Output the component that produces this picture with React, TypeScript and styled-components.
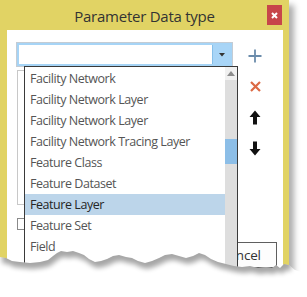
import React from 'react';
import styled, { createGlobalStyle } from 'styled-components';

const Global = createGlobalStyle`
  html, body { margin: 0; padding: 0; background: #fff; }
  body { font-family: "Open Sans", "Noto Sans", sans-serif; }
  * { box-sizing: border-box; }
`;

const Page = styled.div`
  position: relative;
  width: 307px;
  height: 297px;
  overflow: hidden;
  background: #fff;
`;

const Window = styled.div`
  width: 289px;
  height: 340px;
  background: #e1d364;
  box-shadow: 5px 5px 6px rgba(0, 0, 0, 0.32);
  display: flex;
  flex-direction: column;
`;

const TitleBar = styled.div`
  height: 30px;
  display: grid;
  grid-template-columns: 1fr auto 1fr;
  align-items: center;
`;

const Title = styled.div`
  grid-column: 2;
  font-size: 15px;
  color: #333;
  letter-spacing: -0.25px;
  padding-top: 1px;
`;

const CloseBtn = styled.div`
  grid-column: 3;
  justify-self: end;
  align-self: start;
  margin-top: 5px;
  margin-right: 7px;
  width: 15px;
  height: 20px;
  background: #c7464a;
  display: flex;
  align-items: center;
  justify-content: center;
`;

const Content = styled.div`
  flex: 1;
  margin: 0 6px 0 7px;
  background: #fff;
  padding: 12px 0 0 9px;
`;

const Body = styled.div`
  display: flex;
`;

const LeftCol = styled.div`
  width: 217px;
  display: flex;
  flex-direction: column;
`;

const Combo = styled.div`
  height: 25px;
  border: 1px solid #c4ccd4;
  box-shadow: inset 0 0 0 2px #a6d4f6;
  display: flex;
  justify-content: flex-end;
  padding: 2px;
`;

const ComboButton = styled.div`
  width: 18px;
  background: #a8d5f7;
  border-left: 1px solid #86bfe9;
  display: flex;
  align-items: center;
  justify-content: center;
`;

const ListBox = styled.div`
  margin: 3px 0 0 1px;
  height: 135px;
  width: 216px;
  border: 1px solid #c8c8c8;
`;

const CheckRow = styled.div`
  margin-top: 13px;
  margin-left: 1px;
  display: flex;
  align-items: center;
`;

const CheckBox = styled.div`
  width: 12px;
  height: 12px;
  border: 1px solid #8a8a8a;
  background: #fff;
`;

const IconCol = styled.div`
  width: 44px;
  margin-top: -2px;
  display: flex;
  flex-direction: column;
  align-items: center;
`;

const IconCell = styled.div`
  height: 31px;
  display: flex;
  align-items: center;
  justify-content: center;
`;

const Footer = styled.div`
  margin-top: 12px;
  padding-right: 6px;
  display: flex;
  justify-content: flex-end;
`;

const Button = styled.div`
  width: 73px;
  height: 26px;
  border: 1px solid #5e5e5e;
  background: #fdfdfd;
  font-size: 13.5px;
  letter-spacing: -0.2px;
  color: #333;
  display: flex;
  align-items: center;
  justify-content: center;
`;

const Dropdown = styled.div`
  position: absolute;
  left: 24px;
  top: 66px;
  width: 214px;
  height: 240px;
  border: 1px solid #3a3a3a;
  background: #fff;
  display: flex;
`;

const Items = styled.div`
  flex: 1;
  display: flex;
  flex-direction: column;
  padding-top: 1px;
`;

const Item = styled.div<{ $selected?: boolean }>`
  height: 21px;
  line-height: 22px;
  padding-left: 5px;
  font-size: 12.5px;
  letter-spacing: -0.45px;
  white-space: nowrap;
  color: ${(p) => (p.$selected ? '#262626' : '#555')};
  background: ${(p) => (p.$selected ? '#bcd5ea' : 'transparent')};
`;

const ScrollBar = styled.div`
  width: 12px;
  display: flex;
  flex-direction: column;
  background: #dedede;
`;

const ScrollArrow = styled.div`
  height: 13px;
  background: #f0f0f0;
  display: flex;
  align-items: center;
  justify-content: center;
`;

const Thumb = styled.div`
  margin-top: 59px;
  height: 25px;
  background: #8cbee7;
`;

const Tear = styled.svg`
  position: absolute;
  left: 0;
  top: 230px;
`;

const items = [
  'Facility Network',
  'Facility Network Layer',
  'Facility Network Layer',
  'Facility Network Tracing Layer',
  'Feature Class',
  'Feature Dataset',
  'Feature Layer',
  'Feature Set',
  'Field',
  'Field Info',
  'Field Mapping',
];

const line: [number, number][] = [
  [0, 257], [6, 258], [12, 261], [20, 262], [30, 263], [40, 262], [48, 260], [53, 256],
  [57, 253], [61, 251], [67, 252], [73, 251], [79, 253], [84, 255], [89, 259], [95, 262],
  [101, 261], [107, 259], [113, 256], [119, 255], [126, 257], [132, 258], [138, 261],
  [145, 263], [152, 261], [159, 258], [165, 255], [172, 254], [179, 256], [186, 258],
  [193, 256], [199, 253], [205, 255], [211, 259], [218, 262], [226, 264], [234, 266],
  [242, 267], [250, 266], [258, 268], [266, 267], [272, 268], [276, 265], [280, 268],
  [284, 264], [289, 265], [295, 270], [301, 272], [307, 272],
];

const linePath = line.map(([x, y], i) => `${i ? 'L' : 'M'}${x},${y}`).join(' ');
const belowPath = `${linePath} L307,297 L0,297 Z`;
const paperLine = line.filter(([x]) => x <= 289);
const abovePath = `M0,225 L289,225 ${paperLine
  .slice()
  .reverse()
  .map(([x, y]) => `L${x},${y}`)
  .join(' ')} Z`;

export default function App() {
  return (
    <>
      <Global />
      <Page>
        <Window>
          <TitleBar>
            <Title>Parameter Data type</Title>
            <CloseBtn>
              <svg width="7" height="7" viewBox="0 0 7 7">
                <path d="M1 1 L6 6 M6 1 L1 6" stroke="#fff" strokeWidth="2" />
              </svg>
            </CloseBtn>
          </TitleBar>
          <Content>
            <Body>
              <LeftCol>
                <Combo>
                  <ComboButton>
                    <svg width="6" height="4" viewBox="0 0 6 4">
                      <path d="M0 0 H6 L3 3.5 Z" fill="#333" />
                    </svg>
                  </ComboButton>
                </Combo>
                <ListBox />
                <CheckRow>
                  <CheckBox />
                </CheckRow>
              </LeftCol>
              <IconCol>
                <IconCell>
                  <svg width="14" height="14" viewBox="0 0 14 14">
                    <path d="M7 0.5 V13.5 M0.5 7 H13.5" stroke="#6b8cab" strokeWidth="1.8" />
                  </svg>
                </IconCell>
                <IconCell>
                  <svg width="11" height="11" viewBox="0 0 11 11">
                    <path d="M1 1 L10 10 M10 1 L1 10" stroke="#dc6a45" strokeWidth="2.2" />
                  </svg>
                </IconCell>
                <IconCell>
                  <svg width="12" height="15" viewBox="0 0 12 15">
                    <path d="M6 0.5 L11.5 7 H8 V14.5 H4 V7 H0.5 Z" fill="#111" />
                  </svg>
                </IconCell>
                <IconCell>
                  <svg width="12" height="15" viewBox="0 0 12 15">
                    <path d="M6 14.5 L11.5 8 H8 V0.5 H4 V8 H0.5 Z" fill="#111" />
                  </svg>
                </IconCell>
              </IconCol>
            </Body>
            <Footer>
              <Button>Cancel</Button>
            </Footer>
          </Content>
        </Window>
        <Dropdown>
          <Items>
            {items.map((t, i) => (
              <Item key={i} $selected={t === 'Feature Layer'}>
                {t}
              </Item>
            ))}
          </Items>
          <ScrollBar>
            <ScrollArrow>
              <svg width="8" height="5" viewBox="0 0 8 5">
                <path d="M0 5 H8 L4 0 Z" fill="#8c8c8c" />
              </svg>
            </ScrollArrow>
            <Thumb />
          </ScrollBar>
        </Dropdown>
        <Tear width="307" height="67" viewBox="0 230 307 67">
          <defs>
            <filter id="tearBlur" x="-20%" y="-50%" width="140%" height="200%">
              <feGaussianBlur stdDeviation="2.5" />
            </filter>
            <clipPath id="tearBelow">
              <path d={belowPath} />
            </clipPath>
          </defs>
          <path d={belowPath} fill="#fff" />
          <g clipPath="url(#tearBelow)">
            <path
              d={abovePath}
              fill="#000"
              opacity="0.35"
              filter="url(#tearBlur)"
              transform="translate(2,6)"
            />
          </g>
        </Tear>
      </Page>
    </>
  );
}
